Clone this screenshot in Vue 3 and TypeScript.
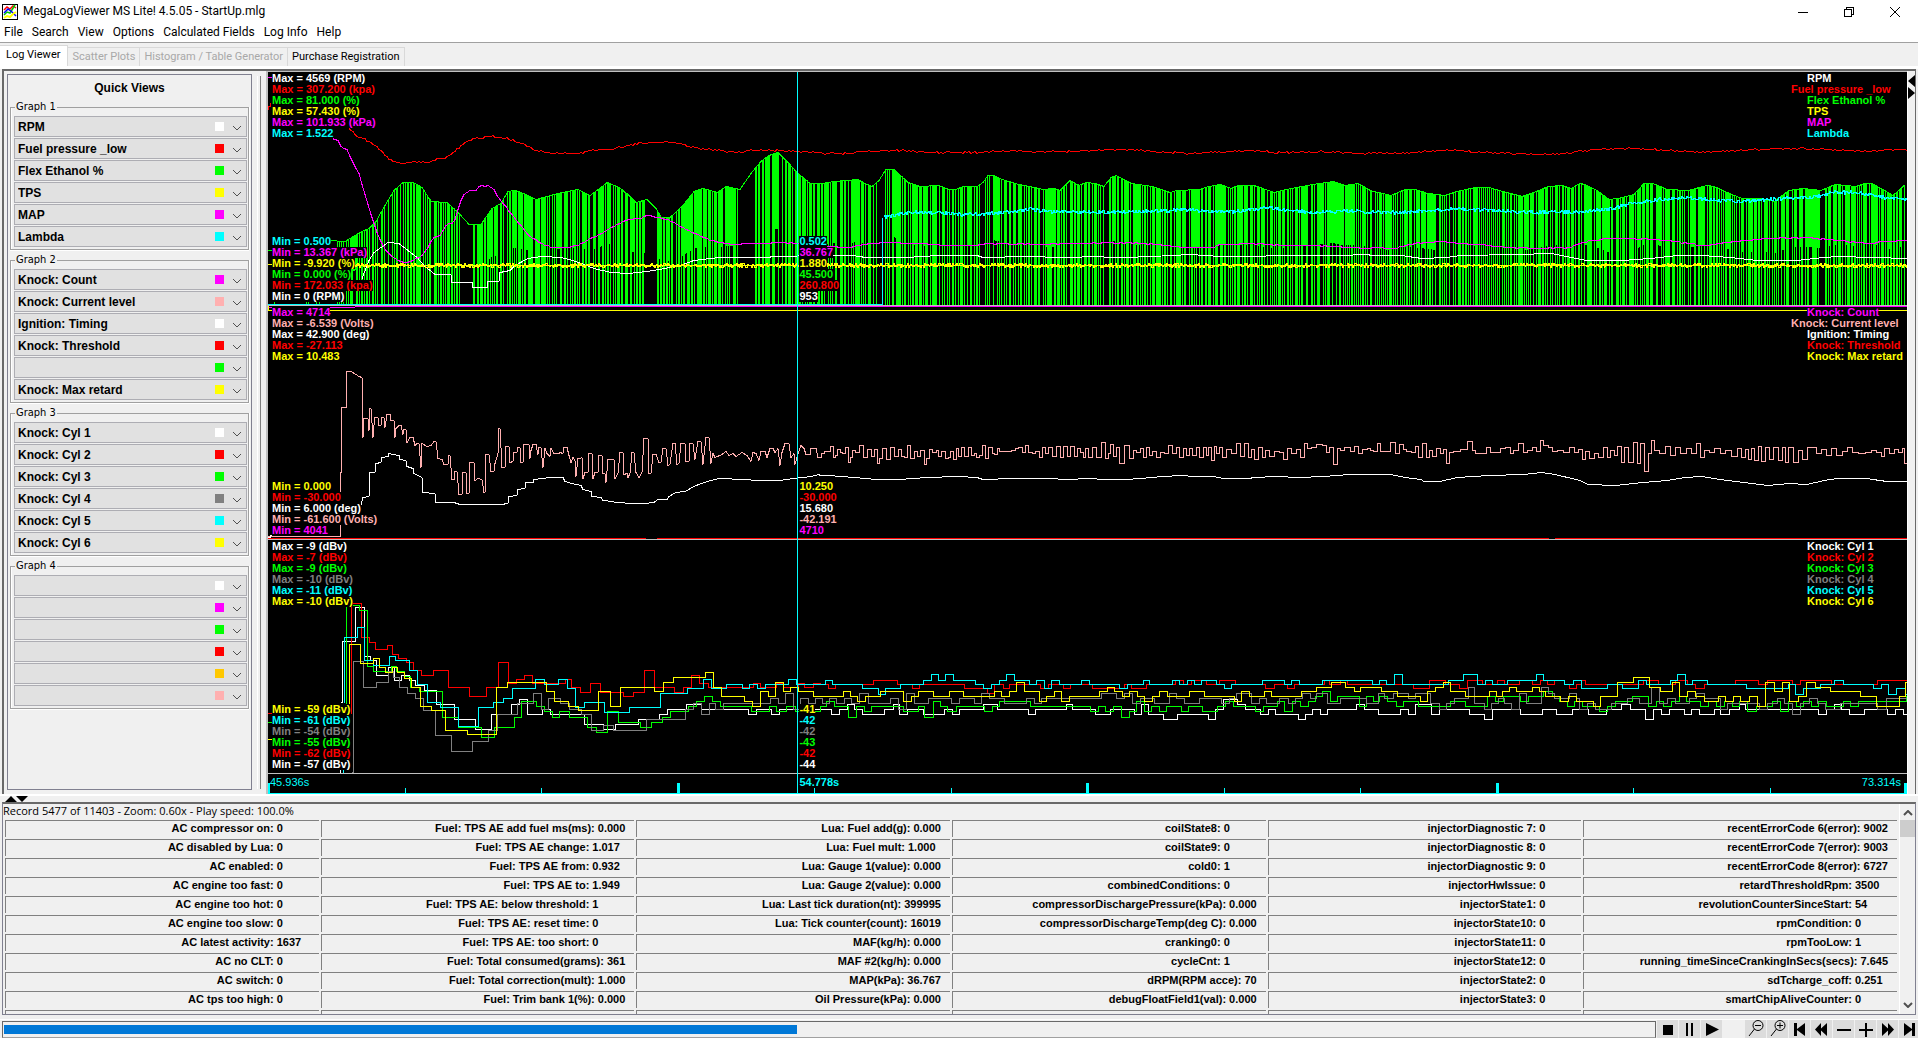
<script setup lang="ts">
import { computed, ref } from 'vue'

type Pt = [number, number]
interface Block { left: number; top: number; unit: number }
interface Line { color: string; text: string; wide?: boolean }
interface Slot { name: string; color: string }
interface Cell { label: string; value: string }

/* ---------- trace decoding ---------- */

const blocks = (tops: number[]): Block[] => [
  { left: 265, top: tops[0], unit: 2.8 },
  { left: 820, top: tops[1], unit: 2.8 },
  { left: 1370, top: tops[2], unit: 2.861 },
]

function decode(parts: string[], frame: Block[]): Pt[] {
  return parts.flatMap((part, i) =>
    part.trim().split(/\s+/).map((pair): Pt => {
      const [x, y] = pair.split(',').map(Number)
      return [Math.round(frame[i].left + x / frame[i].unit), Math.round(frame[i].top + y / 3)]
    }),
  )
}

function makeRandom(seed: number) {
  let s = seed
  return () => {
    s = (s * 1664525 + 1013904223) % 4294967296
    return s / 4294967296
  }
}

const levelAt = (pts: Pt[], x: number): number => {
  for (let i = 1; i < pts.length; i++) {
    if (pts[i][0] >= x) {
      const [x0, y0] = pts[i - 1]
      const [x1, y1] = pts[i]
      return x1 === x0 ? y1 : y0 + ((y1 - y0) * (x - x0)) / (x1 - x0)
    }
  }
  return pts[pts.length - 1][1]
}

const polyline = (pts: Pt[]) => 'M' + pts.map(([x, y]) => `${x} ${y}.5`).join('L')

const stepped = (pts: Pt[], end = 1907) =>
  `M${pts[0][0]} ${pts[0][1]}.5` + pts.slice(1).map(([x, y]) => `H${x}.5V${y}.5`).join('') + `H${end}`

function midStepped(pts: Pt[]) {
  let d = `M${pts[0][0]} ${pts[0][1]}.5`
  for (let i = 1; i < pts.length; i++) {
    d += `H${Math.round((pts[i - 1][0] + pts[i][0]) / 2)}.5V${pts[i][1]}.5`
  }
  return d + 'H1907'
}

function noisy(pts: Pt[], amp: number, seed: number, step = 1) {
  const rnd = makeRandom(seed)
  let d = ''
  for (let x = pts[0][0]; x <= pts[pts.length - 1][0]; x += step) {
    const y = Math.round(levelAt(pts, x) + (rnd() - 0.5) * 2 * amp)
    d += d ? `L${x} ${y}.5` : `M${x} ${y}.5`
  }
  return d
}

/* ---------- graph 1 ---------- */

const g1 = blocks([65, 65, 65])

const ethanol = decode([
  '180,525 225,528 265,500 292,488 310,468 335,420 360,375 385,352 415,352 440,365 465,408 510,412 545,448 570,477 605,478 635,430 660,415 680,378 700,375 730,388 760,403 790,393 820,383 875,372 910,390 940,365 957,352 990,365 1020,390 1040,410 1070,403 1095,430 1108,455 1135,455 1170,420 1200,378 1225,370 1265,381 1290,364 1330,373 1360,325 1390,288 1410,270 1435,260 1460,285 1490,322 1525,355 1553,355',
  '5,355 40,347 105,342 120,352 145,363 165,345 185,313 208,313 245,350 280,363 330,360 360,373 380,372 400,363 440,362 455,350 470,330 485,330 510,343 545,355 600,365 625,373 655,369 672,375 700,346 725,360 745,350 770,355 795,364 815,335 830,330 870,355 930,364 980,382 1000,376 1060,373 1090,364 1120,357 1150,370 1170,360 1215,360 1270,380 1320,368 1380,357 1435,348 1470,360 1505,355 1538,373',
  '0,375 60,390 100,373 130,373 165,385 215,390 250,377 300,366 340,366 380,377 435,392 470,380 510,362 550,360 575,370 600,355 615,357 650,375 685,402 710,400 755,388 785,355 810,355 850,372 910,376 965,360 985,362 1020,380 1065,400 1120,400 1155,408 1200,375 1240,370 1290,375 1330,357 1390,363 1415,355 1435,355 1495,390 1528,360',
], g1)

const fuel = decode([
  '235,188 262,215 275,218 300,235 320,250 345,280 370,290 390,293 420,288 455,290 480,282 505,280 530,260 560,232 580,222 605,215 635,213 660,216 690,222 720,233 760,255 800,264 850,265 880,265 910,255 970,253 1000,243 1050,235 1100,230 1130,228 1170,238 1210,248 1270,256 1320,260 1360,256 1460,255 1500,258 1550,262',
  '0,263 80,263 130,258 200,254 250,254 300,260 440,261 470,257 520,256 590,258 690,257 770,256 850,252 940,257 1040,263 1150,258 1215,256 1280,260 1400,259 1510,263 1535,263',
  '0,261 60,263 120,260 190,254 250,255 320,260 400,264 520,267 600,258 680,250 760,249 850,254 970,260 1040,255 1100,252 1230,249 1310,252 1420,257 1500,253 1538,253',
], g1)

const map = decode([
  '180,215 205,225 215,250 230,252 245,290 262,325 275,370 290,425 305,475 325,530 345,565 360,580 385,590 410,588 440,570 455,545 470,520 490,510 510,475 530,472 545,410 555,390 570,378 590,375 600,362 628,360 640,372 655,400 665,415 690,445 710,475 730,500 750,520 775,535 800,545 850,545 880,540 910,518 940,503 970,487 1010,465 1050,458 1070,450 1100,457 1130,465 1180,493 1220,513 1265,530 1310,536 1380,534 1430,530 1490,535 1550,542',
  '20,544 80,546 100,540 160,535 200,531 270,535 350,540 440,541 460,535 600,537 680,533 720,535 860,532 940,538 1020,545 1100,545 1120,537 1215,535 1290,541 1400,540 1538,548',
  '0,548 80,545 130,533 210,527 300,538 400,545 500,550 570,545 620,528 680,520 740,518 850,526 950,540 1040,528 1140,520 1260,517 1330,524 1430,533 1480,527 1538,525',
], g1)

const rpm = decode([
  '272,640 290,585 305,560 345,530 375,535 400,555 425,575 445,600 475,628 520,628 523,652 580,652 582,667 622,667 625,649 655,649 657,622 685,615 700,600 735,578 775,572 830,575 850,583 880,592 920,610 970,620 1020,623 1070,618 1120,610 1170,598 1200,585 1270,575 1350,577 1485,574 1520,568',
  '40,570 90,570 130,577 240,575 330,571 440,571 455,577 580,573 680,576 790,574 800,577 850,577 930,572 1040,568 1120,573 1200,574 1300,571 1450,571 1536,568',
  '0,569 90,570 150,578 220,575 260,571 420,568 520,565 560,572 620,584 720,586 800,578 880,571 950,569 1030,577 1110,585 1220,586 1300,577 1340,574 1440,576 1538,580',
], g1)

const lambda = decode([
  '1566,455',
  '178,455 250,442 300,440 330,440 400,446 450,447 540,438 590,433 650,438 760,440 900,437 980,435 1030,431 1080,437 1170,437 1230,428 1260,425 1320,436 1380,442 1500,436 1538,440',
  '0,440 80,442 180,436 260,430 350,436 480,440 620,437 680,432 750,415 830,402 900,397 960,402 1060,408 1120,402 1190,400 1260,395 1330,382 1380,382 1430,388 1480,398 1538,402',
], g1).slice(1)

const blanks: Pt[] = [[460, 473], [645, 657], [740, 755], [878, 885], [982, 985], [1104, 1109], [1820, 1825]]

const bars = computed(() => {
  const rnd = makeRandom(77)
  const base = 305
  let d = ''
  let x = 337
  while (x < 1905) {
    const pick = rnd()
    const run = pick < 0.62 ? 1 : pick < 0.86 ? 2 : pick < 0.96 ? 3 : 5
    const gap = rnd() < 0.72 ? 1 : rnd() < 0.75 ? 2 : 3
    const solid = rnd() < (x > 480 ? 0.22 : 0.06)
    for (let k = 0; k < run + gap && x < 1905; k++, x++) {
      const top = Math.round(levelAt(ethanol, x))
      if (blanks.some(([a, b]) => x >= a && x < b)) continue
      if (k < run) d += `M${x}.5 ${top}V${base}`
      else if (solid) d += `M${x}.5 ${top}V${Math.round((top + base) / 2)}`
    }
  }
  return d
})

const throttle: Pt[] = [[354, 265], [1907, 265]]

/* ---------- graph 2 ---------- */

const g2 = blocks([300, 420, 420])

const knockStart = decode([
  '7,707 211,707 211,515 214,515 214,320 228,320 228,214 240,214 255,222 262,228 272,230 275,410 278,355 287,355 290,390 293,325 298,325 301,410 306,375 309,350 317,350 319,375 325,375 328,352 334,352 336,382 341,341 351,341 354,360 361,360 363,410 368,385 375,376 382,376 385,403 390,386 396,386 398,425 405,410 415,410 420,436 425,428 432,428 437,500 440,430 453,437 465,434 472,422 480,422 484,474 495,477 500,492 513,492 514,466 519,466 523,537 528,537 530,512 538,512 542,582 552,582 554,515 562,515 565,580 570,580 573,487 586,487 589,540 595,535 607,537 612,577 617,577 620,463 628,463 632,512 640,512 645,490 652,460 654,385 659,385 663,500 672,500 676,438 682,438 686,487 695,482 698,455 705,455 708,440 715,440 717,487 722,487 725,433 738,433 741,475 745,450 751,433 760,433 763,462 767,440 774,440 779,500 783,443 790,460 798,468 802,445 808,460 822,460 826,455 833,460 836,442 845,442 850,465 857,487 862,470 868,480 871,527 875,473 883,473 887,470 891,535 897,517 903,517 908,460 915,460 919,535 925,515 932,515 936,466 943,466 947,520 952,520 955,545 960,478 978,478 981,535 989,520 994,455 1002,455 1006,522 1013,520 1017,532 1022,520 1028,455 1034,455 1038,515 1048,530 1055,515 1061,415 1071,415 1075,520 1082,520 1087,463 1095,463 1102,487 1110,487 1115,445 1123,445 1128,495 1135,493 1141,430 1149,430 1153,493 1160,490 1166,430 1176,430 1180,482 1187,482 1191,428 1199,428 1204,477 1211,424 1221,424 1226,493 1234,410 1244,410 1248,490 1255,458 1260,470 1280,463 1290,452 1298,465 1310,460 1320,468 1335,457 1350,465 1360,484 1367,457 1375,458 1382,480 1390,452 1400,452 1405,470 1415,443 1422,443 1428,457 1435,445 1441,495 1448,457 1457,430 1467,430 1473,470 1480,460 1485,493 1492,460 1500,436 1510,445 1515,462 1525,462 1530,445 1543,445 1548,472 1554,472',
], g2)

const knockRun = decode([
  '1552,472',
  '0,112 5,98 15,94 25,94 31,79 40,112 43,105 50,86 58,97 65,100 72,82 81,127 87,112 91,90 101,95 114,74 125,112 138,88 146,108 154,88 163,130 168,115 178,85 190,118 201,82 213,108 222,88 230,108 238,110 246,76 258,115 266,92 275,108 285,90 293,132 300,115 309,86 320,95 328,90 334,108 345,92 354,115 360,110 366,92 376,118 384,85 390,108 398,82 408,108 418,82 427,105 435,98 440,110 448,105 456,74 465,115 476,80 485,100 490,102 497,85 505,92 530,92 540,90 548,83 560,80 570,97 578,74 587,97 597,100 607,92 615,112 624,80 632,100 644,80 655,108 666,77 675,110 685,77 695,108 705,77 714,108 722,85 730,97 738,110 746,85 755,112 768,80 778,112 792,65 802,115 808,98 814,72 824,108 832,80 843,128 857,74 870,115 878,90 890,95 900,85 908,110 916,82 925,105 935,92 945,112 955,95 970,100 981,74 990,100 1000,82 1010,110 1018,85 1027,105 1037,85 1047,105 1056,82 1066,112 1075,82 1083,105 1088,80 1097,120 1105,77 1112,100 1120,82 1132,112 1142,88 1155,100 1170,68 1181,108 1192,68 1202,110 1210,86 1222,118 1232,80 1241,112 1252,90 1264,108 1277,92 1290,95 1303,118 1313,85 1323,100 1337,88 1349,110 1357,70 1368,85 1380,82 1398,72 1412,74 1420,97 1430,80 1441,132 1449,84 1460,90 1475,82 1490,92 1500,78 1510,98 1525,88 1538,85',
  '0,90 16,92 24,68 34,92 48,92 65,65 76,100 88,72 98,88 110,92 125,95 133,77 142,110 154,68 164,112 172,90 182,108 195,85 205,100 213,88 221,128 229,97 245,92 270,88 286,62 294,90 304,98 322,100 337,80 347,97 362,95 377,85 395,82 403,100 413,90 431,70 442,95 456,90 470,80 481,92 490,60 500,75 515,82 526,93 542,90 560,97 576,82 590,97 600,88 608,118 619,92 631,115 646,98 659,112 673,82 682,110 692,90 701,105 711,78 721,125 733,80 745,125 757,65 767,130 778,68 789,152 797,100 808,60 818,90 832,100 853,78 864,105 877,82 892,98 912,85 924,100 937,70 949,112 962,90 977,97 992,84 1007,100 1022,90 1042,108 1056,85 1066,112 1076,88 1084,118 1093,85 1103,120 1113,78 1123,122 1134,80 1146,118 1160,80 1172,120 1181,80 1191,125 1203,80 1218,127 1229,90 1241,118 1256,80 1268,80 1282,100 1296,88 1311,105 1326,85 1341,105 1356,92 1370,82 1385,95 1405,100 1425,97 1440,90 1455,97 1465,108 1476,85 1490,98 1505,88 1516,97 1526,85 1532,128',
], g2)

const timing = decode([
  '262,615 270,613 275,590 292,587 293,517 308,517 310,490 325,487 328,470 343,468 345,460 375,464 378,478 395,480 398,498 413,503 418,520 440,532 443,577 475,578 480,607 530,607 545,612 660,613 680,610 683,587 705,585 707,566 728,564 730,547 750,545 752,537 775,533 800,530 835,532 840,542 860,550 885,555 890,568 912,572 915,588 940,590 945,600 975,603 980,607 1035,610 1065,608 1090,606 1100,598 1125,596 1130,588 1150,577 1175,572 1200,557 1220,548 1250,541 1270,535 1340,537 1380,541 1440,540 1480,533 1530,527 1552,523',
  '0,165 25,164 95,170 130,175 155,178 220,177 300,170 385,168 440,171 455,176 540,173 640,173 690,177 760,175 790,178 855,178 900,173 960,167 1010,164 1050,167 1100,169 1130,174 1200,174 1215,170 1280,167 1340,170 1410,169 1480,163 1536,163',
  '0,163 60,163 100,170 145,176 155,184 200,182 250,172 340,165 440,163 490,157 530,161 600,180 625,191 700,196 780,186 850,180 900,170 950,167 1000,176 1140,195 1200,188 1250,192 1300,181 1340,175 1420,174 1480,184 1538,184',
], g2)

/* ---------- graph 3 ---------- */

const g3 = blocks([530, 420, 420])

const cylinders: { color: string; parts: string[] }[] = [
  { color: '#fff', parts: [
    '214,515 215,334 252,232 276,379 295,391 312,436 345,412 362,451 380,436 402,451 421,466 445,481 480,523 530,568 588,598 632,553 688,523 712,508 733,553 775,538 798,553 893,583 947,598 980,583 1043,568 1102,553 1125,538 1178,523 1220,538 1353,553 1374,538 1418,553 1440,538',
    '0,868 32,883 52,868 75,853 95,868 117,883 180,868 204,853 220,883 243,868 288,883 348,868 370,883 390,868 455,853 496,868 582,883 602,868 688,853 706,868 770,883 813,868 878,883 900,853 918,883 960,898 1000,883 1085,898 1105,868 1127,838 1168,853 1190,868 1232,883 1253,868 1275,883 1337,898 1358,883 1378,868 1400,883 1420,868 1502,853 1522,868',
    '0,868 23,883 87,868 110,883 130,853 175,883 197,868 284,883 326,898 348,868 430,883 492,868 532,883 578,868 625,883 675,868 718,853 743,868 787,898 810,868 832,883 855,868 897,883 917,868 940,883 983,868 1002,883 1027,868 1055,853 1073,868 1283,883 1305,868 1327,853 1348,868 1370,883 1412,868 1480,883 1502,868 1525,883'] },
  { color: '#f00', parts: [
    '238,550 242,218 270,320 290,335 308,358 341,346 355,371 373,385 394,397 413,421 437,436 470,421 512,472 571,498 618,472 651,397 679,460 704,448 726,436 747,460 840,448 856,472 881,487 909,460 937,487 1001,499 1031,487 1061,421 1090,472 1146,487 1169,472 1194,436 1216,460 1240,472 1365,460 1385,472 1430,460 1450,472 1491,460 1510,472 1535,460',
    '0,791 22,803 43,791 149,779 215,791 258,803 278,791 403,803 468,818 487,791 512,803 530,791 615,803 637,791 680,803 699,791 762,803 852,791 872,803 912,791 995,779 1015,791 1040,779 1080,791 1118,779 1162,791 1247,803 1270,791 1308,803 1328,791 1412,779 1425,791 1455,779 1475,791',
    '0,791 123,803 170,779 215,791 256,803 278,779 320,791 362,779 383,791 425,779 464,791 485,779 505,791 527,779 556,791 570,803 590,791 603,779 616,791 780,779 823,791 872,779 908,791 930,803 955,791 1043,779 1110,791 1135,779 1207,791 1230,779 1320,791 1450,779'] },
  { color: '#0f0', parts: [
    '226,577 228,226 262,241 285,409 302,424 352,409 368,424 388,439 405,470 430,484 495,562 540,592 604,622 640,592 696,562 718,514 760,529 782,544 804,562 823,544 850,562 902,592 928,607 958,544 988,577 1050,592 1082,577 1112,562 1135,544 1185,529 1208,514 1230,499 1252,514 1273,529 1360,544 1410,529 1430,544 1460,529 1485,544',
    '0,859 17,844 38,859 78,892 101,859 122,874 144,859 231,874 274,859 292,892 315,844 336,859 355,874 380,859 459,874 481,859 502,844 588,859 756,874 777,859 798,874 820,859 842,892 864,874 884,844 906,874 926,859 948,874 968,859 1010,874 1030,859 1070,874 1112,859 1134,844 1156,859 1218,874 1240,859 1280,844 1300,874 1322,844 1345,859 1365,844 1385,829 1405,814 1428,844 1448,829 1508,859 1530,829',
    '0,829 8,844 27,829 48,844 73,859 95,844 138,859 228,844 273,859 335,829 357,844 380,829 430,844 452,829 495,814 520,829 541,844 563,859 585,844 607,859 655,874 678,859 702,844 750,829 795,859 817,844 838,859 860,844 885,829 903,844 945,859 967,844 990,859 1012,844 1035,859 1057,844 1079,874 1103,859 1150,844 1174,874 1195,844 1218,859 1240,844 1262,859 1283,844 1305,859 1352,844 1372,859 1397,844 1533,829'] },
  { color: '#808080', parts: [
    '244,727 245,394 275,472 310,457 343,424 358,442 375,472 397,490 420,505 443,541 477,616 522,664 580,634 623,601 650,553 706,520 750,490 772,538 793,505 825,520 850,538 885,553 912,601 945,586 975,601 1067,568 1175,538 1198,520 1220,553 1242,520 1260,538 1282,520 1413,505 1435,520 1456,490 1478,538 1498,505 1520,520 1540,505',
    '0,835 5,850 25,835 45,850 68,835 88,850 110,820 133,850 196,835 217,868 242,820 263,850 303,835 368,850 388,835 430,850 452,820 472,835 514,850 577,835 600,850 620,835 788,820 830,835 852,820 873,850 895,835 935,850 978,820 998,835 1020,850 1060,835 1123,850 1145,835 1165,820 1208,850 1230,835 1250,850 1285,835 1310,850 1330,835 1350,820 1372,835 1390,820 1420,850 1455,835 1530,850',
    '0,850 22,820 40,835 65,820 108,835 130,820 172,850 198,868 218,850 240,835 280,802 298,850 325,868 345,850 365,835 382,850 403,868 427,820 447,850 488,802 508,820 525,835 570,820 588,835 597,868 620,850 645,868 690,850 735,835 770,850 805,802 828,850 850,835 872,850 912,835 932,820 957,835 1000,868 1020,850 1113,868 1135,850 1163,835 1185,850 1208,883 1230,850 1257,835 1280,850 1302,868 1345,850 1450,868 1475,835'] },
  { color: '#0ff', parts: [
    '221,515 222,322 258,292 278,390 302,405 346,379 365,391 403,421 425,463 453,517 490,532 540,589 595,532 637,517 665,505 692,475 757,448 781,463 821,448 845,475 868,532 893,517 950,547 1018,532 1106,490 1182,475 1227,448 1248,475 1292,463 1336,475 1355,463 1378,475 1400,463 1465,448 1486,463',
    '0,793 15,779 33,793 118,805 162,821 183,805 225,793 289,779 312,763 330,779 351,763 373,779 435,793 457,805 480,793 501,779 522,763 543,779 584,793 605,779 627,805 648,779 668,793 732,779 753,793 838,805 860,793 903,779 922,793 985,779 1004,793 1027,779 1046,793 1068,779 1110,793 1131,805 1152,793 1237,779 1298,793 1320,779 1340,793 1405,779',
    '0,779 5,793 27,779 47,793 69,763 91,793 224,779 267,763 307,793 330,779 350,793 393,779 475,763 495,779 555,793 582,779 605,805 678,793 722,805 768,779 789,793 857,779 879,763 900,793 920,779 965,793 1077,805 1195,793 1217,821 1240,805 1287,793 1328,779 1352,793 1440,805 1462,793 1483,821 1505,805 1530,821'] },
  { color: '#ff0', parts: [
    '231,628 234,343 265,400 303,385 320,412 335,427 355,412 370,427 388,445 410,472 435,529 465,541 505,601 565,613 647,472 677,457 786,484 809,514 848,529 877,541 933,484 965,529 995,472 1088,484 1113,457 1141,442 1233,427 1254,472 1278,499 1340,514 1363,529 1387,484 1408,499 1429,457 1450,484 1471,472 1492,484 1535,499',
    '0,829 63,814 83,829 104,844 125,829 168,814 233,844 254,829 275,814 317,829 360,814 401,829 486,814 507,829 529,814 550,787 570,814 612,844 633,829 655,814 676,844 697,829 782,814 803,802 824,814 845,829 866,814 887,829 908,844 929,829 950,814 971,829 1034,814 1076,829 1158,844 1180,814 1201,829 1244,814 1264,829 1348,814 1390,802 1430,787 1471,802 1494,814 1513,802',
    '0,802 32,814 76,829 142,844 163,814 185,802 209,787 230,814 273,829 340,814 361,829 378,814 398,802 419,814 463,802 483,814 500,829 545,844 567,829 588,844 637,859 659,829 708,787 753,772 797,802 830,814 865,787 885,829 908,814 930,829 955,844 995,829 1015,844 1038,829 1060,844 1084,829 1107,859 1131,787 1155,814 1179,787 1200,844 1225,829 1248,787 1272,802 1315,814 1403,829 1447,859 1513,829 1532,787'] },
]

const stub = (color: string, d: string) => ({ color, d })

const plots = [
  {
    view: '268 72 1639 233',
    paths: [
      stub('#0f0', bars.value + polyline(ethanol)),
      stub('#0f0', 'M268 250.5H272M306.5 300V304M308.5 300V304M316.5 300V304M319.5 300V304M274.5 300V304'),
      stub('#fff', polyline(rpm)),
      stub('#f00', noisy(fuel, 0.8, 5, 2) + 'M268 110V106H270V103'),
      stub('#f0f', 'M268 77.5H272' + noisy(map, 0.5, 21, 3)),
      stub('#0ff', 'M268 304.5H882.5V217.5' + noisy(lambda, 1.7, 9)),
      stub('#ff0', 'M268 264.5H273' + noisy(throttle, 2, 13) + 'M354 265.5H1907'),
    ],
  },
  {
    view: '268 306 1639 233',
    paths: [
      stub('#f0f', 'M268 307.5H355M355 306.5H1907'),
      stub('#ff0', 'M268.5 306V310M268 310.5H1907'),
      stub('#ffb0b0', polyline(knockStart) + midStepped(knockRun)),
      stub('#fff', 'M268 537.5H270V535.5H274' + polyline(timing)),
      stub('#f00', 'M268 538.5H646M657 538.5H1549M1555 538.5H1907'),
    ],
  },
  {
    view: '268 540 1639 233',
    paths: [
      ...cylinders.map((c) => stub(c.color, stepped(decode(c.parts, g3)))),
      stub('#f00', 'M268 713.5H272'),
      stub('#0f0', 'M268 722.5H272'),
      stub('#ff0', 'M268 739.5H272'),
      stub('#fff', 'M340.5 768V773'),
      stub('#0ff', 'M343.5 768V773'),
    ],
  },
]

/* ---------- labels ---------- */

const W = '#fff', R = '#f00', G = '#0f0', Y = '#ff0', M = '#f0f', C = '#0ff', P = '#ffb0b0', S = '#808080'
const L = (color: string, text: string, wide = false): Line => ({ color, text, wide })

const captions: { max: Line[]; min: Line[]; now: Line[]; names: Line[] }[] = [
  {
    max: [L(W, 'Max = 4569 (RPM)'), L(R, 'Max = 307.200 (kpa)'), L(G, 'Max = 81.000 (%)'), L(Y, 'Max = 57.430 (%)'), L(M, 'Max = 101.933 (kPa)'), L(C, 'Max = 1.522')],
    min: [L(C, 'Min = 0.500'), L(M, 'Min = 13.367 (kPa)'), L(Y, 'Min = -9.920 (%)'), L(G, 'Min = 0.000 (%)'), L(R, 'Min = 172.033 (kpa)'), L(W, 'Min = 0 (RPM)')],
    now: [L(C, '0.502'), L(M, '36.767'), L(Y, '1.880'), L(G, '45.500'), L(R, '260.800'), L(W, '953')],
    names: [L(W, 'RPM'), L(R, 'Fuel pressure _low', true), L(G, 'Flex Ethanol %'), L(Y, 'TPS'), L(M, 'MAP'), L(C, 'Lambda')],
  },
  {
    max: [L(M, 'Max = 4714'), L(P, 'Max = -6.539 (Volts)'), L(W, 'Max = 42.900 (deg)'), L(R, 'Max = -27.113'), L(Y, 'Max = 10.483')],
    min: [L(Y, 'Min = 0.000'), L(R, 'Min = -30.000'), L(W, 'Min = 6.000 (deg)'), L(P, 'Min = -61.600 (Volts)'), L(M, 'Min = 4041')],
    now: [L(Y, '10.250'), L(R, '-30.000'), L(W, '15.680'), L(P, '-42.191'), L(M, '4710')],
    names: [L(M, 'Knock: Count'), L(P, 'Knock: Current level', true), L(W, 'Ignition: Timing'), L(R, 'Knock: Threshold'), L(Y, 'Knock: Max retard')],
  },
  {
    max: [L(W, 'Max = -9 (dBv)'), L(R, 'Max = -7 (dBv)'), L(G, 'Max = -9 (dBv)'), L(S, 'Max = -10 (dBv)'), L(C, 'Max = -11 (dBv)'), L(Y, 'Max = -10 (dBv)')],
    min: [L(Y, 'Min = -59 (dBv)'), L(C, 'Min = -61 (dBv)'), L(S, 'Min = -54 (dBv)'), L(G, 'Min = -55 (dBv)'), L(R, 'Min = -62 (dBv)'), L(W, 'Min = -57 (dBv)')],
    now: [L(Y, '-41'), L(C, '-42'), L(S, '-42'), L(G, '-43'), L(R, '-42'), L(W, '-44')],
    names: [L(W, 'Knock: Cyl 1'), L(R, 'Knock: Cyl 2'), L(G, 'Knock: Cyl 3'), L(S, 'Knock: Cyl 4'), L(C, 'Knock: Cyl 5'), L(Y, 'Knock: Cyl 6')],
  },
]

const ticks = Array.from({ length: 13 }, (_, i) => ({
  x: Math.min(1637, Math.round(i * 136.5)),
  major: i % 3 === 0,
}))

/* ---------- quick views ---------- */

const slot = (name: string, color: string): Slot => ({ name, color })
const groups: { title: string; slots: Slot[] }[] = [
  { title: 'Graph 1', slots: [slot('RPM', W), slot('Fuel pressure _low', R), slot('Flex Ethanol %', G), slot('TPS', Y), slot('MAP', M), slot('Lambda', C)] },
  { title: 'Graph 2', slots: [slot('Knock: Count', M), slot('Knock: Current level', P), slot('Ignition: Timing', W), slot('Knock: Threshold', R), slot('', G), slot('Knock: Max retard', Y)] },
  { title: 'Graph 3', slots: [slot('Knock: Cyl 1', W), slot('Knock: Cyl 2', R), slot('Knock: Cyl 3', G), slot('Knock: Cyl 4', S), slot('Knock: Cyl 5', C), slot('Knock: Cyl 6', Y)] },
  { title: 'Graph 4', slots: [slot('', W), slot('', M), slot('', G), slot('', R), slot('', '#ffc800'), slot('', P)] },
]

/* ---------- record table ---------- */

const columns: string[][] = [
  ['AC compressor on: 0', 'AC disabled by Lua: 0', 'AC enabled: 0', 'AC engine too fast: 0', 'AC engine too hot: 0', 'AC engine too slow: 0', 'AC latest activity: 1637', 'AC no CLT: 0', 'AC switch: 0', 'AC tps too high: 0'],
  ['Fuel: TPS AE add fuel ms(ms): 0.000', 'Fuel: TPS AE change: 1.017', 'Fuel: TPS AE from: 0.932', 'Fuel: TPS AE to: 1.949', 'Fuel: TPS AE: below threshold: 1', 'Fuel: TPS AE: reset time: 0', 'Fuel: TPS AE: too short: 0', 'Fuel: Total consumed(grams): 361', 'Fuel: Total correction(mult): 1.000', 'Fuel: Trim bank 1(%): 0.000'],
  ['Lua: Fuel add(g): 0.000', 'Lua: Fuel mult: 1.000', 'Lua: Gauge 1(value): 0.000', 'Lua: Gauge 2(value): 0.000', 'Lua: Last tick duration(nt): 399995', 'Lua: Tick counter(count): 16019', 'MAF(kg/h): 0.000', 'MAF #2(kg/h): 0.000', 'MAP(kPa): 36.767', 'Oil Pressure(kPa): 0.000'],
  ['coilState8: 0', 'coilState9: 0', 'cold0: 1', 'combinedConditions: 0', 'compressorDischargePressure(kPa): 0.000', 'compressorDischargeTemp(deg C): 0.000', 'cranking0: 0', 'cycleCnt: 1', 'dRPM(RPM acce): 70', 'debugFloatField1(val): 0.000'],
  ['injectorDiagnostic 7: 0', 'injectorDiagnostic 8: 0', 'injectorDiagnostic 9: 0', 'injectorHwIssue: 0', 'injectorState1: 0', 'injectorState10: 0', 'injectorState11: 0', 'injectorState12: 0', 'injectorState2: 0', 'injectorState3: 0'],
  ['recentErrorCode 6(error): 9002', 'recentErrorCode 7(error): 9003', 'recentErrorCode 8(error): 6727', 'retardThresholdRpm: 3500', 'revolutionCounterSinceStart: 54', 'rpmCondition: 0', 'rpmTooLow: 1', 'running_timeSinceCrankingInSecs(secs): 7.645', 'sdTcharge_coff: 0.251', 'smartChipAliveCounter: 0'],
]

const rows: Cell[][] = Array.from({ length: 10 }, (_, r) =>
  columns.map((col) => {
    const cut = col[r].lastIndexOf(': ')
    return { label: col[r].slice(0, cut + 1), value: col[r].slice(cut + 2) }
  }),
)

const menus = ['File', 'Search', 'View', 'Options', 'Calculated Fields', 'Log Info', 'Help']
const tabs = [
  { name: 'Log Viewer', state: 'active' },
  { name: 'Scatter Plots', state: 'disabled' },
  { name: 'Histogram / Table Generator', state: 'disabled' },
  { name: 'Purchase Registration', state: 'plain' },
]

const record = ref(5477)
const total = ref(11403)
const progress = computed(() => (record.value / total.value) * 100)

const transport = [
  { name: 'Stop', d: 'M6 8H16V18H6Z' },
  { name: 'Pause', d: 'M7 6H9V19H7ZM12 6H14V19H12Z' },
  { name: 'Play', d: 'M5 6L18 12.5L5 19Z' },
]
const navigation = [
  { name: 'Zoom out', lens: true, d: 'M10 8.5H16' },
  { name: 'Zoom in', lens: true, d: 'M10 8.5H16M13 5.500V11.500' },
  { name: 'First record', d: 'M5 6H8V12L16 6V19L8 13V19H5Z' },
  { name: 'Slower', d: 'M4 12.5L10 6V11.500L16 6V19L10 13.500V19Z' },
  { name: 'Previous', d: 'M4 12H18V14H4Z' },
  { name: 'Next', d: 'M10 6H12V12H18V14H12V20H10V14H4V12H10Z' },
  { name: 'Faster', d: 'M17 12.5L11 6V11.500L5 6V19L11 13.500V19Z' },
  { name: 'Last record', d: 'M5 6L13 12V6H16V19H13V13L5 19Z' },
]
</script>

<template>
  <div class="window">
    <header class="titlebar">
      <svg class="logo" width="16" height="16" viewBox="0 0 16 16">
        <rect x="0.5" y="0.5" width="15" height="15" fill="#fff" stroke="#000" />
        <path d="M2 6L5 3L8 5L11 2L14 4" fill="none" stroke="#f00" stroke-width="1.500" />
        <path d="M2 11L5 8L8 9L13 1" fill="none" stroke="#0c0" stroke-width="1.500" />
        <path d="M2 9L6 5L10 8L14 12" fill="none" stroke="#00f" stroke-width="1.500" />
        <path d="M2 14L5 12L8 13L11 10L14 8" fill="none" stroke="#ff0" stroke-width="2" />
      </svg>
      <h1>MegaLogViewer MS Lite! 4.5.05 - StartUp.mlg</h1>
      <div class="controls">
        <button type="button" aria-label="Minimize"><svg width="12" height="12"><path d="M1 6.5H11" /></svg></button>
        <button type="button" aria-label="Restore"><svg width="12" height="12"><path d="M1.5 3.5H8.500V10.500H1.500ZM3.500 3.500V1.500H10.500V8.500H8.500" /></svg></button>
        <button type="button" aria-label="Close"><svg width="12" height="12"><path class="smooth" d="M1 1L11 11M11 1L1 11" /></svg></button>
      </div>
    </header>

    <nav class="menubar">
      <a v-for="m in menus" :key="m" href="#">{{ m }}</a>
    </nav>

    <div class="tabs" role="tablist">
      <button v-for="t in tabs" :key="t.name" type="button" role="tab" :class="['tab', t.state]" :disabled="t.state === 'disabled'">{{ t.name }}</button>
    </div>

    <main class="workspace">
      <aside class="quick">
        <h2>Quick Views</h2>
        <fieldset v-for="g in groups" :key="g.title">
          <legend>{{ g.title }}</legend>
          <div v-for="(s, i) in g.slots" :key="i" class="slot">
            <select :aria-label="`${g.title} field ${i + 1}`"><option>{{ s.name }}</option></select>
            <span class="swatch" :style="{ background: s.color }"></span>
            <svg class="chevron" width="10" height="6" viewBox="0 0 10 6"><path d="M1 1L5 5L9 1" /></svg>
          </div>
        </fieldset>
      </aside>
      <div class="splitter"></div>

      <section class="charts">
        <div v-for="(p, i) in plots" :key="i" class="plot">
          <svg :viewBox="p.view" preserveAspectRatio="none">
            <path v-for="(line, k) in p.paths" :key="k" :d="line.d" :stroke="line.color" />
          </svg>
          <div class="stack max"><span v-for="(l, k) in captions[i].max" :key="k" :style="{ color: l.color }">{{ l.text }}</span></div>
          <div class="stack min"><span v-for="(l, k) in captions[i].min" :key="k" :style="{ color: l.color }">{{ l.text }}</span></div>
          <div class="stack now"><span v-for="(l, k) in captions[i].now" :key="k" :style="{ color: l.color }">{{ l.text }}</span></div>
          <div class="stack names"><span v-for="(l, k) in captions[i].names" :key="k" :class="{ wide: l.wide }" :style="{ color: l.color }">{{ l.text }}</span></div>
        </div>
        <div class="axis">
          <svg viewBox="0 0 1639 20" preserveAspectRatio="none">
            <path d="M0 19.5H1639" />
            <path v-for="t in ticks" :key="t.x" :class="{ major: t.major }" :d="`M${t.x} ${t.major ? 9 : 14}V20`" />
          </svg>
          <span class="from">45.936s</span>
          <strong>54.778s</strong>
          <span class="to">73.314s</span>
        </div>
        <div class="cursor"></div>
      </section>

      <div class="collapse">
        <svg width="7" height="28"><path d="M7 2V14L0 8ZM0 14V26L7 20Z" /></svg>
      </div>
    </main>

    <div class="divider">
      <svg width="26" height="6"><path d="M1 6L7 0L13 6ZM12 0H24L18 6Z" /></svg>
    </div>

    <section class="records">
      <p>Record {{ record }} of {{ total }} - Zoom: 0.60x - Play speed: 100.0%</p>
      <div class="viewport">
        <table>
          <tbody>
            <tr v-for="(row, r) in rows" :key="r">
              <td v-for="c in row" :key="c.label">
                <div class="pair" :class="{ unit: c.label.includes('(') }"><span>{{ c.label }}</span><b>{{ c.value }}</b></div>
              </td>
            </tr>
            <tr><td v-for="n in 6" :key="n"></td></tr>
          </tbody>
        </table>
      </div>
      <div class="scroll">
        <svg width="10" height="6" viewBox="0 0 10 6"><path d="M1 5L5 1L9 5" /></svg>
        <div class="thumb"></div>
        <svg width="10" height="6" viewBox="0 0 10 6"><path d="M1 1L5 5L9 1" /></svg>
      </div>
    </section>

    <footer class="player">
      <div class="track" role="progressbar" :aria-valuenow="record" :aria-valuemax="total">
        <div class="fill" :style="{ width: progress + '%' }"></div>
      </div>
      <div class="buttons">
        <button v-for="b in transport" :key="b.name" type="button" :aria-label="b.name">
          <svg width="21" height="19" viewBox="0 3 21 19"><path :d="b.d" /></svg>
        </button>
      </div>
      <div class="buttons nav">
        <button v-for="b in navigation" :key="b.name" type="button" :aria-label="b.name">
          <svg width="21" height="19" viewBox="0 3 21 19">
            <g v-if="b.lens" class="lens"><circle cx="13" cy="8.5" r="5" /><path d="M9.500 12L4 19" /><path :d="b.d" /></g>
            <path v-else :d="b.d" />
          </svg>
        </button>
      </div>
    </footer>
  </div>
</template>

<style>
body { margin: 0; background: #f0f0f0; overflow: hidden; }
</style>

<style scoped>
.window {
  display: flex; flex-direction: column; height: 100vh; overflow: hidden;
  background: #f0f0f0; color: #000; font-family: Roboto, "Open Sans", sans-serif; font-size: 12px;
}
button { margin: 0; padding: 0; border: 0; background: none; font: inherit; color: inherit; }

.titlebar { display: flex; align-items: center; height: 23px; padding-left: 2px; background: #fff; }
.titlebar h1 { margin: 0 0 0 5px; font-size: 12px; font-weight: 400; line-height: 23px; flex: 1; }
.controls { display: flex; }
.controls button { display: grid; place-items: center; width: 46px; height: 20px; }
.controls svg { fill: none; stroke: #000; shape-rendering: crispEdges; }
.controls .smooth { shape-rendering: auto; }

.menubar { display: flex; gap: 9px; height: 19px; padding-left: 4px; background: #fff; border-bottom: 1px solid #a0a0a0; }
.menubar a { color: #000; text-decoration: none; line-height: 19px; }

.tabs { display: flex; align-items: flex-end; height: 23px; border-bottom: 3px solid #fff; font-size: 11px; }
.tab { height: 19px; padding: 0 4px 2px; border: 1px solid #d9d9d9; border-bottom: 0; border-left: 0; }
.tab.active { height: 21px; padding: 0 7px 3px 6px; background: #fff; }
.tab.disabled { color: #a8a8a8; }

.workspace { flex: 1; display: flex; min-height: 0; margin: 0 2px; border: 2px solid #696969; border-bottom: 0; border-right: 0; }
.quick { box-sizing: border-box; width: 245px; margin: 3px 0 4px 3px; padding: 0 2px; border: 1px solid #808090; font-family: "Liberation Sans", Arial, sans-serif; }
.quick h2 { margin: 6px 0 5px; font-size: 12px; line-height: 14px; text-align: center; }
fieldset { margin: 0 0 3px; padding: 2px 1px 1px 3px; border: 1px solid #a0a0a0; box-shadow: inset 1px 0 #fff, 0 1px #fff, 1px 0 #fff; }
legend { margin-left: 1px; padding: 0 1px; font: 11px/14px "DejaVu Sans Condensed", "DejaVu Sans", sans-serif; }
.slot { position: relative; height: 21px; margin-bottom: 1px; }
.slot select {
  display: block; box-sizing: border-box; width: 100%; height: 21px; padding: 0 0 0 3px; appearance: none;
  border: 1px solid #adadb3; border-radius: 0; background: #e1e1e1; color: #000; font: bold 12px "Liberation Sans", Arial, sans-serif;
}
.swatch { position: absolute; right: 23px; top: 6px; width: 9px; height: 9px; pointer-events: none; }
.chevron { position: absolute; right: 5px; top: 9px; fill: none; stroke: #505050; pointer-events: none; }
.splitter { width: 3px; margin: 5px 5px 5px 5px; border-right: 1px solid #808080; box-shadow: inset 1px 0 #fff; }

.charts { position: relative; flex: 1; display: flex; flex-direction: column; margin: 1px 0 0; background: #000; border-left: 2px solid #c0c0c0; box-shadow: 0 -1px #c0c0c0; font: bold 11px/11px "Liberation Sans", Arial, sans-serif; }
.plot { position: relative; flex: 1; min-height: 0; border-bottom: 1px solid #c0c0c0; }
.plot > svg, .axis > svg { position: absolute; inset: 0; width: 100%; height: 100%; fill: none; shape-rendering: crispEdges; }
.stack { position: absolute; display: flex; flex-direction: column; align-items: flex-start; white-space: pre; }
.stack span { background: #000; }
.max { left: 4px; top: 1px; }
.min { left: 4px; bottom: 3px; }
.now { left: calc(32.3% + 2px); bottom: 3px; }
.names { right: 0; top: 1px; width: 100px; }
.names .wide { margin-left: -16px; }
.cursor { position: absolute; left: 32.3%; top: 0; bottom: 0; width: 1px; background: #0ff; }
.axis { position: relative; height: 20px; color: #0ff; }
.axis svg { stroke: #0ff; }
.axis .major { stroke-width: 3px; }
.axis span, .axis strong { position: absolute; top: 2px; line-height: 12px; }
.axis span { font-weight: 400; }
.axis .from { left: 2px; }
.axis .to { right: 6px; }
.axis strong { left: calc(32.3% + 2px); }
.collapse { width: 7px; padding-top: 2px; border-left: 1px solid #fff; border-right: 1px solid #696969; }

.divider { height: 6px; padding-left: 4px; border-top: 2px solid #fff; line-height: 0; }

.records { position: relative; display: grid; grid-template-columns: 1fr 16px; height: 210px; margin: 0 2px; border: 1px solid #808090; border-top: 2px solid #696969; }
.records p { grid-column: 1; margin: 0; height: 14px; line-height: 14px; font-size: 11px; font-family: "Open Sans", "Noto Sans", sans-serif; }
.viewport { grid-column: 1; height: 196px; overflow: hidden; }
.scroll { grid-column: 2; grid-row: 1 / 3; display: flex; flex-direction: column; align-items: center; padding: 6px 0; border-left: 1px solid #fff; }
.scroll svg { fill: none; stroke: #505050; stroke-width: 2px; }
.thumb { width: 15px; height: 17px; margin-top: 4px; margin-bottom: auto; background: #cdcdcd; }
table { width: 100%; table-layout: fixed; border-collapse: separate; border-spacing: 2px; font: 700 11px/14px "Liberation Sans", Arial, sans-serif; }
td { height: 16px; padding: 0; border-top: 1px solid #808080; border-left: 1px solid #808080; }
.pair { display: flex; justify-content: flex-end; gap: 3px; white-space: nowrap; height: 16px; }
.pair b { width: 42px; }
.pair.unit b { width: auto; padding-right: 9px; }

.player { display: flex; height: 19px; margin-top: 4px; border-top: 1px solid #fff; box-sizing: border-box; padding-left: 2px; }
.track { flex: 1; box-sizing: border-box; height: 17px; margin-top: 1px; padding: 3px 1px; border: 1px solid #696969; border-bottom-color: #a0a0a0; }
.fill { height: 9px; background: #0078d7; }
.buttons { display: flex; gap: 1px; margin-left: 1px; }
.buttons.nav { margin-left: 23px; margin-right: -2px; }
.buttons button { width: 21px; height: 19px; background: #dcdcdc; line-height: 0; }
.lens { fill: none; stroke: #000; }
</style>
